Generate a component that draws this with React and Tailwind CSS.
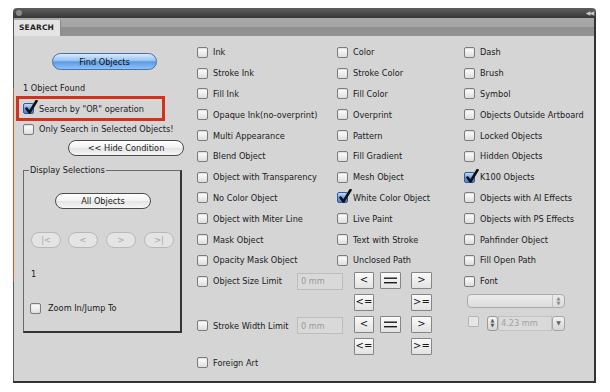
import React from "react";

function Box({ checked, disabled }) {
  if (checked) {
    return (
      <span className="relative inline-block w-[11px] h-[11px] shrink-0 rounded-[2px] border border-[#355a96] bg-[linear-gradient(#c4dbf7,#6a9be0_55%,#4a82d4)]">
        <svg className="absolute left-[1px] -top-[4px] w-[13px] h-[14px]" viewBox="0 0 13 14">
          <path d="M1.5 8.5 L4.5 12.5 L11.5 1" fill="none" stroke="#111" strokeWidth="2.6" strokeLinecap="round" strokeLinejoin="round" />
        </svg>
      </span>
    );
  }
  if (disabled) {
    return <span className="inline-block w-[11px] h-[11px] shrink-0 rounded-[2px] border border-[#b4b4b4] bg-[#e6e6e6]" />;
  }
  return (
    <span className="inline-block w-[11px] h-[11px] shrink-0 rounded-[2px] border border-[#7c7c7c] bg-[linear-gradient(#ffffff,#dedede)] shadow-[inset_0_1px_1px_rgba(0,0,0,0.12)]" />
  );
}

function Row({ label, checked }) {
  return (
    <div className="flex items-center h-[20.8px] pl-[2px]">
      <Box checked={checked} />
      <span className="ml-[5px] whitespace-nowrap">{label}</span>
    </div>
  );
}

function Sq({ children, w }) {
  return (
    <div
      className={`flex items-center justify-center h-[17px] ${w} border border-[#858585] rounded-[1px] bg-[linear-gradient(#fafafa,#e2e2e2)] text-[#1a1a1a] text-[10px] leading-none`}
    >
      {children}
    </div>
  );
}

function Eq() {
  return (
    <svg width="13" height="7" viewBox="0 0 13 7">
      <rect x="0" y="0.5" width="13" height="1.4" fill="#1a1a1a" />
      <rect x="0" y="5" width="13" height="1.4" fill="#1a1a1a" />
    </svg>
  );
}

function Compare() {
  return (
    <div className="flex flex-col gap-[5px]">
      <div className="flex">
        <div className="ml-[19px]"><Sq w="w-[20px]">&lt;</Sq></div>
        <div className="ml-[6px]"><Sq w="w-[21px]"><Eq /></Sq></div>
        <div className="ml-[10px]"><Sq w="w-[21px]">&gt;</Sq></div>
      </div>
      <div className="flex">
        <div className="ml-[19px]"><Sq w="w-[20px]">&lt;=</Sq></div>
        <div className="ml-[37px]"><Sq w="w-[21px]">&gt;=</Sq></div>
      </div>
    </div>
  );
}

function MmInput() {
  return (
    <div className="shrink-0 w-[46px] h-[17px] border border-[#bdbdbd] bg-[#d9d9d9] text-[#9a9a9a] pl-[3px] flex items-center">
      0 mm
    </div>
  );
}

function NavBtn({ children }) {
  return (
    <div className="w-[30px] h-[16px] rounded-full border border-[#b8b8b8] bg-[#e4e4e4] text-[#a6a6a6] flex items-center justify-center">
      {children}
    </div>
  );
}

export default function App() {
  const col2 = [
    "Ink",
    "Stroke Ink",
    "Fill Ink",
    "Opaque Ink(no-overprint)",
    "Multi Appearance",
    "Blend Object",
    "Object with Transparency",
    "No Color Object",
    "Object with Miter Line",
    "Mask Object",
    "Opacity Mask Object",
  ];
  const col3 = [
    "Color",
    "Stroke Color",
    "Fill Color",
    "Overprint",
    "Pattern",
    "Fill Gradient",
    "Mesh Object",
    "White Color Object",
    "Live Paint",
    "Text with Stroke",
    "Unclosed Path",
  ];
  const col4 = [
    "Dash",
    "Brush",
    "Symbol",
    "Objects Outside Artboard",
    "Locked Objects",
    "Hidden Objects",
    "K100 Objects",
    "Objects with AI Effects",
    "Objects with PS Effects",
    "Pahfinder Object",
    "Fill Open Path",
    "Font",
  ];

  return (
    <div className="w-[610px] h-[392px] bg-white overflow-hidden font-['DejaVu_Sans',sans-serif] text-[8.2px] text-[#1a1a22] leading-[12px]">
      <div className="ml-[13px] mt-[8px] w-[583px] flex flex-col">
        {/* title bar */}
        <div className="h-[10px] rounded-t-[4px] bg-[linear-gradient(#5e5e5e,#363636)] flex items-center justify-between">
          <span className="ml-[3px] w-[6px] h-[6px] rounded-full bg-[#8a8a8a]" />
          <span className="mr-[3px] text-[6px] leading-none text-[#c8c8c8] tracking-[-1px]">◀◀</span>
        </div>
        {/* tab row */}
        <div className="h-[18px] flex items-end bg-[linear-gradient(#a9a9a9_0%,#a3a3a3_50%,#8f8f8f_52%,#939393_100%)] border-l border-[#555] border-r-2 border-r-[#333]">
          <div className="w-[47px] h-[16px] bg-[#e4e4e4] border-r border-r-[#8a8a8a] flex items-center pl-[5px] text-[7.5px] font-bold text-[#222] tracking-[0.2px]">
            SEARCH
          </div>
        </div>
        {/* body */}
        <div className="h-[347px] flex border-b-2 border-[#333] border-r-2 border-r-[#333]">
          <div className="w-[1px] bg-[linear-gradient(to_bottom,#5a5a5a_52px,#cf5a24_52px,#cf5a24_246px,#5a5a5a_246px)]" />
          <div className="flex-1 flex bg-[#d5d5d5]">
            {/* left panel */}
            <div className="w-[181px] flex flex-col items-start">
              <div className="mt-[17px] ml-[38px] w-[105px] h-[17px] rounded-full border border-[#4a6ea8] bg-[linear-gradient(#d9eafc_0%,#98c2f2_45%,#5c9ae6_52%,#8cc2f8_100%)] flex items-center justify-center text-[#111]">
                Find Objects
              </div>
              <div className="mt-[12px] ml-[9px] h-[12px]">1 Object Found</div>
              <div className="mt-[2px] ml-[2px] w-[149px] h-[25px] border-[3px] border-[#d4301c] flex items-center pl-[4px]">
                <Box checked />
                <span className="ml-[5px] whitespace-nowrap">Search by "OR" operation</span>
              </div>
              <div className="mt-[1px] ml-[9px] h-[14px] flex items-center">
                <Box />
                <span className="ml-[5px] whitespace-nowrap">Only Search in Selected Objects!</span>
              </div>
              <div className="mt-[4px] ml-[54px] w-[116px] h-[16px] rounded-full border border-[#4c4c4c] bg-[linear-gradient(#ffffff,#f2f2f2_50%,#e4e4e4_52%,#f6f6f6)] flex items-center justify-center">
                &lt;&lt; Hide Condition
              </div>
              <fieldset className="mt-[8px] ml-[9px] w-[159px] h-[169px] border border-[#6a6a6a] border-r-2 border-b-2 border-r-[#333] border-b-[#333] flex flex-col items-start">
                <legend className="ml-[5px] px-[1px] h-[12px]">Display Selections</legend>
                <div className="mt-[17px] ml-[31px] w-[96px] h-[16px] rounded-full border border-[#4c4c4c] bg-[linear-gradient(#ffffff,#f2f2f2_50%,#e4e4e4_52%,#f6f6f6)] flex items-center justify-center">
                  All Objects
                </div>
                <div className="mt-[23px] ml-[7px] flex">
                  <NavBtn>|&lt;</NavBtn>
                  <div className="ml-[7px]"><NavBtn>&lt;</NavBtn></div>
                  <div className="ml-[8px]"><NavBtn>&gt;</NavBtn></div>
                  <div className="ml-[8px]"><NavBtn>&gt;|</NavBtn></div>
                </div>
                <div className="mt-[20px] ml-[7px] h-[12px]">1</div>
                <div className="mt-[21px] ml-[6px] h-[14px] flex items-center">
                  <Box />
                  <span className="ml-[7px]">Zoom In/Jump To</span>
                </div>
              </fieldset>
            </div>
            {/* column 2 */}
            <div className="w-[140px] pt-[6px] flex flex-col">
              {col2.map((l) => (
                <Row key={l} label={l} />
              ))}
              <div className="flex items-center h-[20.8px] pl-[2px]">
                <Box />
                <span className="shrink-0 ml-[5px] w-[84px] whitespace-nowrap">Object Size Limit</span>
                <MmInput />
              </div>
              <div className="mt-[24px] flex items-center h-[20.8px] pl-[2px]">
                <Box />
                <span className="shrink-0 ml-[5px] w-[84px] whitespace-nowrap">Stroke Width Limit</span>
                <MmInput />
              </div>
              <div className="mt-[16px]">
                <Row label="Foreign Art" />
              </div>
            </div>
            {/* column 3 */}
            <div className="w-[127px] pt-[6px] flex flex-col">
              {col3.map((l) => (
                <Row key={l} label={l} checked={l === "White Color Object"} />
              ))}
              <div className="mt-[1px] flex flex-col gap-[5px]">
                <Compare />
                <Compare />
              </div>
            </div>
            {/* column 4 */}
            <div className="flex-1 pt-[6px] flex flex-col">
              {col4.map((l) => (
                <Row key={l} label={l} checked={l === "K100 Objects"} />
              ))}
              <div className="mt-[2px] ml-[5px] w-[98px] h-[14px] rounded-[4px] border border-[#ababab] bg-[linear-gradient(#ececec,#dcdcdc)] flex justify-end">
                <div className="w-[12px] border-l border-[#c4c4c4] flex flex-col items-center justify-center text-[5px] leading-[5px] text-[#888]">
                  <span>▲</span>
                  <span>▼</span>
                </div>
              </div>
              <div className="mt-[8px] flex items-center h-[15px]">
                <div className="ml-[6px]"><Box disabled /></div>
                <div className="ml-[8px] w-[78px] h-[15px] flex items-stretch">
                  <div className="w-[11px] rounded-[3px] border border-[#9a9a9a] bg-[linear-gradient(#f4f4f4,#d4d4d4)] flex flex-col items-center justify-center text-[5px] leading-[5px] text-[#555]">
                    <span>▲</span>
                    <span>▼</span>
                  </div>
                  <div className="flex-1 border border-[#c2c2c2] bg-[#dadada] text-[#a2a2a2] flex items-center pl-[2px]">
                    4.23 mm
                  </div>
                  <div className="w-[13px] rounded-[3px] border border-[#a4a4a4] bg-[linear-gradient(#f2f2f2,#d6d6d6)] flex items-center justify-center text-[6px] leading-none text-[#666]">
                    ▼
                  </div>
                </div>
              </div>
            </div>
          </div>
        </div>
      </div>
    </div>
  );
}
